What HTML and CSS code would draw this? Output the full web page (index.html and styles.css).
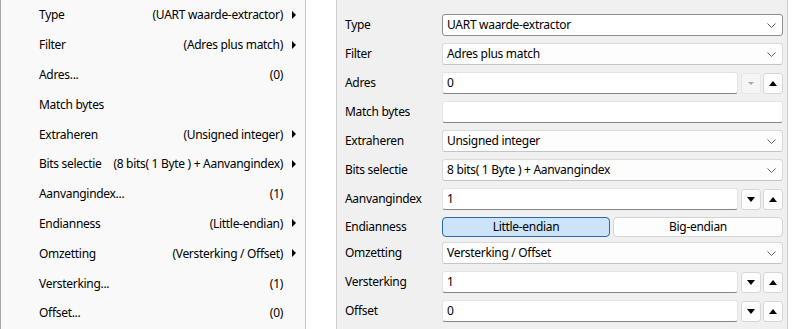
FILE: index.html
```
<!DOCTYPE html>
<html>
	<head>
		<meta charset="utf-8" />
		<title>UART waarde-extractor</title>
		<link rel="stylesheet" href="styles.css">
	</head>
	<body>
		<div class="screen">
			<!--menu begin-->
			<ul class="menu">
				<li><span class="lbl">Type</span><span class="val">(UART waarde-extractor)</span><span class="sub"></span></li>
				<li><span class="lbl">Filter</span><span class="val">(Adres plus match)</span><span class="sub"></span></li>
				<li><span class="lbl">Adres...</span><span class="val">(0)</span><span class="nosub"></span></li>
				<li><span class="lbl">Match bytes</span><span class="val"></span><span class="nosub"></span></li>
				<li><span class="lbl">Extraheren</span><span class="val">(Unsigned integer)</span><span class="sub"></span></li>
				<li><span class="lbl">Bits selectie</span><span class="val">(8 bits( 1 Byte ) + Aanvangindex)</span><span class="sub"></span></li>
				<li><span class="lbl">Aanvangindex...</span><span class="val">(1)</span><span class="nosub"></span></li>
				<li><span class="lbl">Endianness</span><span class="val">(Little-endian)</span><span class="sub"></span></li>
				<li><span class="lbl">Omzetting</span><span class="val">(Versterking / Offset)</span><span class="sub"></span></li>
				<li><span class="lbl">Versterking...</span><span class="val">(1)</span><span class="nosub"></span></li>
				<li><span class="lbl">Offset...</span><span class="val">(0)</span><span class="nosub"></span></li>
			</ul>
			<!--menu end-->
			<div class="gutter"></div>
			<!--panel begin-->
			<div class="panel">
				<div class="row">
					<label>Type</label>
					<div class="combo focus">UART waarde-extractor<svg class="chev" width="9" height="5" viewBox="0 0 9 5"><polyline points="0.5,0.5 4.5,4.5 8.5,0.5" fill="none" stroke="#5f5f5f" stroke-width="1"/></svg></div>
				</div>
				<div class="row">
					<label>Filter</label>
					<div class="combo">Adres plus match<svg class="chev" width="9" height="5" viewBox="0 0 9 5"><polyline points="0.5,0.5 4.5,4.5 8.5,0.5" fill="none" stroke="#5f5f5f" stroke-width="1"/></svg></div>
				</div>
				<div class="row">
					<label>Adres</label>
					<div class="spin">
						<div class="edit">0</div>
						<div class="sbtn off"><span class="tri down"></span></div>
						<div class="sbtn"><span class="tri up"></span></div>
					</div>
				</div>
				<div class="row">
					<label>Match bytes</label>
					<div class="edit"></div>
				</div>
				<div class="row">
					<label>Extraheren</label>
					<div class="combo">Unsigned integer<svg class="chev" width="9" height="5" viewBox="0 0 9 5"><polyline points="0.5,0.5 4.5,4.5 8.5,0.5" fill="none" stroke="#5f5f5f" stroke-width="1"/></svg></div>
				</div>
				<div class="row">
					<label>Bits selectie</label>
					<div class="combo">8 bits( 1 Byte ) + Aanvangindex<svg class="chev" width="9" height="5" viewBox="0 0 9 5"><polyline points="0.5,0.5 4.5,4.5 8.5,0.5" fill="none" stroke="#5f5f5f" stroke-width="1"/></svg></div>
				</div>
				<div class="row">
					<label>Aanvangindex</label>
					<div class="spin">
						<div class="edit">1</div>
						<div class="sbtn"><span class="tri down"></span></div>
						<div class="sbtn"><span class="tri up"></span></div>
					</div>
				</div>
				<div class="row endian">
					<label>Endianness</label>
					<div class="toggle">
						<div class="tbtn on">Little-endian</div>
						<div class="tbtn">Big-endian</div>
					</div>
				</div>
				<div class="row">
					<label>Omzetting</label>
					<div class="combo">Versterking / Offset<svg class="chev" width="9" height="5" viewBox="0 0 9 5"><polyline points="0.5,0.5 4.5,4.5 8.5,0.5" fill="none" stroke="#5f5f5f" stroke-width="1"/></svg></div>
				</div>
				<div class="row">
					<label>Versterking</label>
					<div class="spin">
						<div class="edit">1</div>
						<div class="sbtn"><span class="tri down"></span></div>
						<div class="sbtn"><span class="tri up"></span></div>
					</div>
				</div>
				<div class="row">
					<label>Offset</label>
					<div class="spin">
						<div class="edit">0</div>
						<div class="sbtn"><span class="tri down"></span></div>
						<div class="sbtn"><span class="tri up"></span></div>
					</div>
				</div>
			</div>
			<!--panel end-->
			<div class="edge"></div>
		</div>
	</body>
</html>
```
FILE: styles.css
```
body,div,ul,li,label{
	margin: 0;
	padding: 0;
}
li{
	list-style: none;
}
body{
	font-family: "Noto Sans", "Open Sans", sans-serif;
	font-size: 12px;
	letter-spacing: -0.3px;
	color: #000;
	background: #fff;
}
.screen{
	display: flex;
	width: 792px;
	height: 329px;
	overflow: hidden;
}
/* left context menu */
.menu{
	width: 304px;
	height: 329px;
	background: #f9f9f9;
	border-left: 1px solid #a9a9a9;
	border-right: 1px solid #c8c8c8;
}
.menu li{
	display: flex;
	align-items: center;
	height: 29.8px;
	padding-left: 38px;
	white-space: nowrap;
}
.menu .val{
	margin-left: auto;
}
.menu .sub,
.menu .nosub{
	width: 22px;
	height: 8px;
	flex-shrink: 0;
	position: relative;
}
.menu .sub:after{
	content: "";
	position: absolute;
	left: 9px;
	top: 0;
	border-left: 4px solid #000;
	border-top: 4px solid transparent;
	border-bottom: 4px solid transparent;
}
.gutter{
	width: 30px;
	background: #fff;
	border-right: 1px solid #cfcfcf;
}
/* settings panel */
.panel{
	flex: 1;
	background: #f0f0f0;
	padding: 14px 4px 0 8px;
}
.edge{
	width: 4px;
	background: #fff;
	border-left: 1px solid #cfcfcf;
}
.row{
	display: grid;
	grid-template-columns: 97px 1fr;
	align-items: center;
	height: 22px;
	margin-bottom: 7px;
}
.row label{
	padding-bottom: 2px;
}
.row.endian{
	height: 20px;
	margin-bottom: 5px;
}
.combo{
	position: relative;
	box-sizing: border-box;
	height: 22px;
	line-height: 19px;
	padding-left: 4px;
	background: #fdfdfd;
	border: 1px solid #dadada;
	border-bottom-color: #c4c4c4;
	border-radius: 3px;
}
.combo.focus{
	background: #fff;
	border-color: #8d8d8d;
}
.chev{
	position: absolute;
	right: 6px;
	top: 8px;
}
.spin{
	display: flex;
	gap: 2px;
	height: 22px;
}
.edit{
	flex: 1;
	box-sizing: border-box;
	height: 22px;
	line-height: 19px;
	padding-left: 4px;
	background: #fff;
	border: 1px solid #e3e3e3;
	border-bottom: 1px solid #858585;
	border-radius: 3px;
}
.spin .edit{
	margin-right: 1px;
}
.sbtn{
	display: flex;
	align-items: center;
	justify-content: center;
	box-sizing: border-box;
	width: 20px;
	height: 21px;
	margin-top: 1px;
	background: #fdfdfd;
	border: 1px solid #d6d6d6;
	border-radius: 3px;
}
.sbtn.off{
	background: #f5f5f5;
	border-color: #e6e6e6;
}
.tri{
	width: 0;
	height: 0;
	border-left: 4px solid transparent;
	border-right: 4px solid transparent;
}
.tri.up{
	border-bottom: 5px solid #000;
}
.tri.down{
	border-top: 5px solid #000;
}
.sbtn.off .tri.down{
	border-left-width: 3px;
	border-right-width: 3px;
	border-top: 3px solid #a8a8a8;
}
.toggle{
	display: grid;
	grid-template-columns: 168px 1fr;
	gap: 3px;
	height: 20px;
}
.tbtn{
	box-sizing: border-box;
	height: 20px;
	line-height: 18px;
	text-align: center;
	background: #fdfdfd;
	border: 1px solid #d3d3d3;
	border-radius: 4px;
}
.tbtn.on{
	background: #cce4f7;
	border-color: #2a6aa3;
}
```
